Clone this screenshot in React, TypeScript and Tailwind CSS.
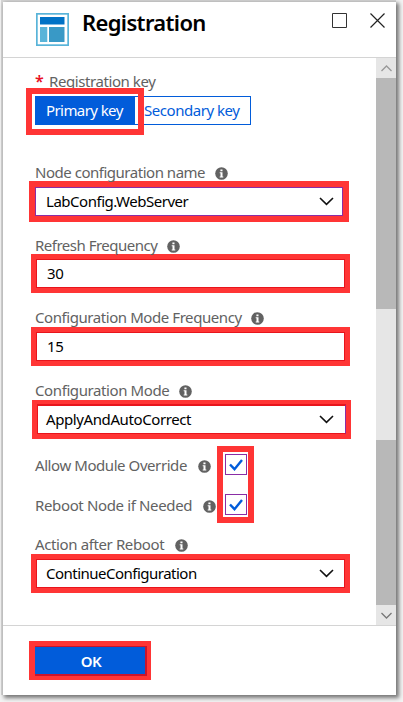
import React from 'react';

function Info() {
  return (
    <svg className="relative top-px h-[13px] w-[13px] shrink-0" viewBox="0 0 13 13">
      <circle cx="6.5" cy="6.5" r="6.3" fill="#626262" />
      <path d="M5.4 2.4h2.1v1.8H5.4zM4.7 5.2h2.8v4.2h.8v1.1H4.7V9.4h.8V6.3h-.8z" fill="#fff" />
    </svg>
  );
}

function Label({ text, fit }: { text: string; fit: string }) {
  return (
    <div className="relative -top-px flex h-5 items-center text-[15px] leading-5 text-[#626262]">
      <span className={`shrink-0 whitespace-nowrap ${fit}`}>{text}</span>
      <Info />
    </div>
  );
}

function Chevron() {
  return (
    <svg className="h-[9px] w-[15px]" viewBox="0 0 15 9" fill="none" stroke="#111" strokeWidth="1.6">
      <path d="M1 1l6.5 6.3L14 1" />
    </svg>
  );
}

function Check() {
  return (
    <div className="flex h-[21px] w-[22px] items-center justify-center border border-[#8a2da5] bg-white">
      <svg className="h-3 w-[14px]" viewBox="0 0 14 12" fill="none" stroke="#015cda" strokeWidth="2.4">
        <path d="M1 5.5l4.5 4.7L13 1" />
      </svg>
    </div>
  );
}

export default function App() {
  return (
    <div className="h-[702px] w-[403px] overflow-hidden bg-[#f3f3f3] pt-[2px] pl-[3px] font-['Noto_Sans','Open_Sans',sans-serif]">
      <div className="flex h-[693px] w-[393px] flex-col bg-white shadow-[2px_2px_4px_1px_#777,-1px_-1px_0px_1px_#d6d6d6]">
        <header className="flex h-14 shrink-0 items-start border-b border-[#d4d4d4] pl-[33px]">
          <svg className="mt-[11px] h-[33px] w-[33px] shrink-0" viewBox="0 0 33 33">
            <path d="M0 0h33v33H0z" fill="#59b4d9" />
            <path d="M1.7 1.7h29.6v29.6H1.7z" fill="#fff" />
            <path d="M4 4h24.5v7.5H4z" fill="#0072c6" />
            <path d="M4 14h7.3v15H4z" fill="#59b4d9" />
            <path d="M13 14h15.5v15H13z" fill="#3999c6" />
          </svg>
          <h1 className="mt-[5px] ml-[13px] w-[250px] text-[22px] leading-[30px] font-semibold tracking-[-0.65px] text-black">Registration</h1>
          <svg className="mt-[11px] h-[15px] w-[15px]" viewBox="0 0 15 15" fill="none" stroke="#333">
            <path d="M.5.5h14v14H.5z" />
          </svg>
          <svg className="mt-[11px] ml-[23px] h-[15px] w-[15px]" viewBox="0 0 15 15" fill="none" stroke="#222" strokeWidth="1.2">
            <path d="M.5.5l14 14M14.5.5l-14 14" />
          </svg>
        </header>

        <div className="flex h-[568px] shrink-0 border-b border-[#d4d4d4]">
          <main className="flex w-[373px] flex-col items-start pl-8">
            <div className="mt-[15px] mb-[-1px] flex h-4 items-center text-[15px] leading-4 text-[#626262]">
              <span className="w-[14px] text-[16px] font-semibold text-[#e81123]">*</span>
              <span className="tracking-[-0.42px] whitespace-nowrap">Registration key</span>
            </div>
            <div className="-ml-[9px] flex h-[47px] items-center">
              <div className="relative z-10 h-[47px] w-[118px] border-6 border-[#ff3535] pt-[2px] pl-[3px]">
                <button className="block h-[29px] w-[99px] bg-[#015cda] pl-[11px] text-left text-[15px] leading-[29px] tracking-[-0.58px] whitespace-nowrap text-white">Primary key</button>
              </div>
              <button className="relative -top-px -ml-[10px] h-[29px] w-[117px] border border-[#015cda] pl-[9px] text-left text-[15px] leading-[27px] tracking-[-0.46px] whitespace-nowrap text-[#015cda]">Secondary key</button>
            </div>

            <div className="mt-[28px]"><Label text="Node configuration name" fit="w-[180px] tracking-[-0.48px]" /></div>
            <div className="mt-[-2px] -ml-[6px] h-[41px] w-[320px] border-6 border-[#ff3535]">
              <div className="flex h-[29px] items-center justify-between border border-[#8a2da5] pr-[8px] pl-[10px] text-[15px] text-black">
                <span className="tracking-[-0.47px]">LabConfig.WebServer</span>
                <Chevron />
              </div>
            </div>

            <div className="mt-[14px]"><Label text="Refresh Frequency" fit="w-[132px] tracking-[-0.5px]" /></div>
            <div className="mt-[-2px] -ml-[4px] h-[39px] w-[319px] border-5 border-[#ff3535]">
              <div className="flex h-[29px] items-center border border-[#e8141c] pl-[10px] text-[15px] tracking-[-0.3px] text-black">30</div>
            </div>

            <div className="mt-[15px]"><Label text="Configuration Mode Frequency" fit="w-[216px] tracking-[-0.43px]" /></div>
            <div className="mt-[-1px] -ml-[4px] h-[39px] w-[319px] border-5 border-[#ff3535]">
              <div className="flex h-[29px] items-center border border-[#e8141c] pl-[10px] text-[15px] tracking-[-0.3px] text-black">15</div>
            </div>

            <div className="mt-[15px]"><Label text="Configuration Mode" fit="w-[144px] tracking-[-0.4px]" /></div>
            <div className="mt-[-1px] -ml-[3px] h-[39px] w-[319px] border-5 border-t-4 border-[#ff3535]">
              <div className="flex h-[30px] items-center justify-between border border-t-2 border-[#e8141c] border-r-[#8a2da5] pr-[11px] pl-[8px] text-[15px] text-black">
                <span className="tracking-[-0.4px]">ApplyAndAutoCorrect</span>
                <Chevron />
              </div>
            </div>

            <div className="mt-[7px] flex">
              <div className="w-[182px] pt-[10px]">
                <Label text="Allow Module Override" fit="w-[163px] tracking-[-0.43px]" />
                <div className="mt-5"><Label text="Reboot Node if Needed" fit="w-[168px] tracking-[-0.36px]" /></div>
              </div>
              <div className="flex h-[77px] w-[37px] flex-col gap-[19px] border-6 border-[#ff3535] pt-[2px] pl-[2px]">
                <Check />
                <Check />
              </div>
            </div>

            <div className="mt-[12px]"><Label text="Action after Reboot" fit="w-[140px] tracking-[-0.38px]" /></div>
            <div className="mt-[-1px] -ml-[4px] h-[39px] w-[319px] border-5 border-[#ff3535]">
              <div className="flex h-[29px] items-center justify-between border border-[#e8141c] pr-[10px] pl-[9px] text-[15px] text-black">
                <span className="tracking-[-0.51px]">ContinueConfiguration</span>
                <Chevron />
              </div>
            </div>
          </main>

          <aside className="flex w-5 flex-col bg-[#e6e6e6]">
            <div className="flex h-5 items-center justify-center">
              <svg className="h-[7px] w-[11px]" viewBox="0 0 11 7" fill="none" stroke="#999" strokeWidth="1.3"><path d="M.5 6l5-5 5 5" /></svg>
            </div>
            <div className="h-[231px] bg-[#b8b8b8]" />
            <div className="h-[131px]" />
            <div className="h-[165px] bg-[#b8b8b8]" />
            <div className="flex h-5 items-center justify-center">
              <svg className="h-[7px] w-[11px]" viewBox="0 0 11 7" fill="none" stroke="#777" strokeWidth="1.3"><path d="M.5 1l5 5 5-5" /></svg>
            </div>
          </aside>
        </div>

        <footer className="pt-[15px] pl-[26px]">
          <div className="h-[39px] w-[122px] border-5 border-r-4 border-b-4 border-l-6 border-[#ff3535]">
            <button className="block h-[30px] w-[112px] border-t border-r-2 border-b-2 border-[#c9142c] bg-[#015cda] pl-[2px] text-center text-[15px] leading-[28px] font-semibold tracking-[-0.4px] text-white">OK</button>
          </div>
        </footer>
      </div>
    </div>
  );
}
